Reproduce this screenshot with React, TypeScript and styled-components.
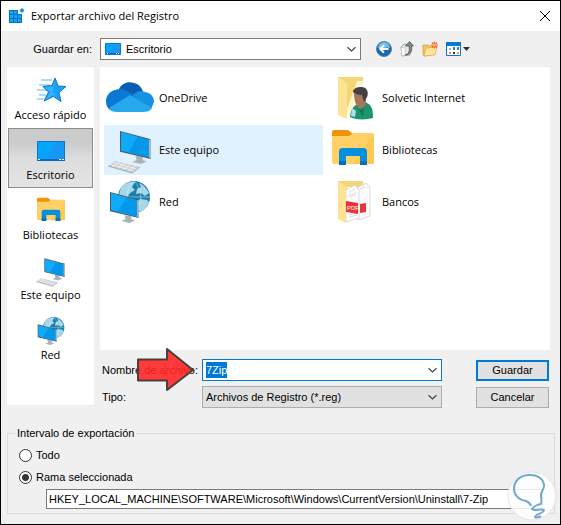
import React, { useEffect, useRef, useState } from "react";
import styled, { createGlobalStyle, css } from "styled-components";

const GlobalStyle = createGlobalStyle`
  *, *::before, *::after { box-sizing: border-box; }
  body { margin: 0; background: #f0f0f0; }
  button, input, select { font: inherit; color: inherit; margin: 0; border-radius: 0; outline: none; }
`;

const shellFont = css`
  font-family: "Open Sans", "Noto Sans", sans-serif;
`;

const Dialog = styled.div`
  display: flex;
  flex-direction: column;
  min-height: 100vh;
  border: 1px solid #000;
  background: #f0f0f0;
  color: #000;
  font: 11px/16px "Liberation Sans", Arial, sans-serif;
`;

const TitleBar = styled.header`
  ${shellFont}
  display: flex;
  align-items: center;
  gap: 6px;
  height: 30px;
  padding: 0 9px 0 8px;
  background: #fff;
`;

const Title = styled.h1`
  flex: 1;
  margin: 0;
  font-size: 11px;
  font-weight: 400;
`;

const IconButton = styled.button`
  display: flex;
  align-items: center;
  padding: 0;
  border: 0;
  background: transparent;

  svg { display: block; }
`;

const Toolbar = styled.div`
  display: grid;
  grid-template-columns: 87px minmax(0, 261px) auto;
  align-items: center;
  padding: 7px 10px 7px 6px;
  column-gap: 6px;
`;

const ToolbarLabel = styled.label`
  padding-right: 2px;
  text-align: right;
`;

const ToolbarActions = styled.div`
  display: flex;
  align-items: center;
  gap: 7px;
  padding-left: 9px;
`;

const Combo = styled.div<{ $tone?: "plain" | "focus" | "grey" }>`
  display: flex;
  align-items: center;
  gap: 4px;
  height: 22px;
  padding: 0 3px;
  border: 1px solid ${(p) => (p.$tone === "focus" ? "#0078d7" : p.$tone === "grey" ? "#adadad" : "#7a7a7a")};
  background: ${(p) => (p.$tone === "grey" ? "#e1e1e1" : "#fff")};

  > svg { flex: none; }
`;

const ComboSelect = styled.select`
  flex: 1;
  min-width: 0;
  height: 18px;
  padding: 0;
  border: 0;
  background: transparent;
  appearance: none;
`;

const ComboInput = styled.input`
  flex: 1;
  min-width: 0;
  height: 16px;
  padding: 0;
  border: 0;
  background: transparent;

  &::selection { background: #0078d7; color: #fff; }
`;

const Browser = styled.div`
  display: grid;
  grid-template-columns: 87px minmax(0, 1fr);
  column-gap: 6px;
  padding: 0 10px 0 6px;
`;

const Places = styled.nav`
  ${shellFont}
  display: flex;
  flex-direction: column;
  align-self: start;
  min-height: 338px;
  padding: 1px;
  background: #fff;
`;

const Place = styled.button<{ $active: boolean }>`
  display: flex;
  flex-direction: column;
  align-items: center;
  justify-content: space-between;
  height: 60px;
  padding: 6px 0 4px;
  border: 1px solid ${(p) => (p.$active ? "#8c8c8c" : "transparent")};
  background: ${(p) => (p.$active ? "linear-gradient(#cbcbcb 0 14px, #dcdcdc 28px, #e4e4e4)" : "transparent")};
  white-space: nowrap;
`;

const Main = styled.div`
  display: flex;
  flex-direction: column;
`;

const FileList = styled.div`
  ${shellFont}
  display: grid;
  grid-template-columns: repeat(2, minmax(0, 219px));
  align-content: start;
  gap: 2px 4px;
  min-height: 283px;
  padding: 6px 4px;
  background: #fff;
`;

const FileItem = styled.button<{ $active: boolean }>`
  display: flex;
  align-items: center;
  gap: 5px;
  height: 50px;
  padding: 0 2px;
  border: 0;
  background: ${(p) => (p.$active ? "#e0f1ff" : "transparent")};
  text-align: left;
`;

const SaveForm = styled.form`
  display: grid;
  grid-template-columns: 100px minmax(0, 240px) minmax(73px, 1fr);
  align-items: center;
  row-gap: 5px;
  padding: 9px 1px 0 2px;
  white-space: nowrap;
`;

const NameLabel = styled.label`
  position: relative;
`;

const Pointer = styled.svg`
  position: absolute;
  left: 34px;
  top: -15px;
  z-index: 1;
  pointer-events: none;
`;

const DialogButton = styled.button<{ $primary?: boolean }>`
  justify-self: end;
  width: 73px;
  height: 21px;
  padding: 0;
  border: ${(p) => (p.$primary ? "2px solid #0078d7" : "1px solid #adadad")};
  background: #e1e1e1;
`;

const Range = styled.fieldset`
  position: relative;
  min-width: 0;
  margin: 17px 5px 9px 6px;
  padding: 3px 11px 4px;
  border: 1px solid #dcdcdc;
`;

const RangeTitle = styled.legend`
  margin-left: -4px;
  padding: 0 2px;
`;

const Choice = styled.label`
  display: flex;
  align-items: center;
  gap: 4px;
  height: 22px;
`;

const Radio = styled.input`
  flex: none;
  width: 13px;
  height: 13px;
  border: 1px solid #333;
  border-radius: 50%;
  background: #fff;
  appearance: none;

  &:checked { background: radial-gradient(circle, #333 0 3px, #fff 4px); }
`;

const BranchPath = styled.input`
  display: block;
  width: calc(100% - 27px);
  height: 20px;
  margin: 1px 0 0 27px;
  padding: 0 2px;
  border: 1px solid #7a7a7a;
  background: #fff;
`;

const Watermark = styled.svg`
  position: absolute;
  right: -3px;
  bottom: -8px;
  pointer-events: none;
`;

type IconProps = { size: number };

const Chevron = () => (
  <svg width="11" height="7" viewBox="0 0 11 7" fill="none" stroke="#444" strokeWidth="1.2">
    <path d="M1.5 1.2 5.5 5 9.5 1.2" />
  </svg>
);

const RegistryIcon = () => (
  <svg width="16" height="16" viewBox="0 0 16 16">
    <path d="M0 2h9v4h4v9H0z" fill="#14a5f5" />
    <path d="M.5 2.5h8v4h4v8H.5zM.5 6.5h12M.5 10.5h12M4.5 2.5v12M8.5 6.5v8" fill="none" stroke="#0873b8" />
    <path d="m13 0 2.6 2.5L13 5l-2.6-2.5z" fill="#1b91dc" />
  </svg>
);

const DesktopIcon = ({ size }: IconProps) => (
  <svg width={size} height={size} viewBox="0 0 32 32">
    <path d="M2 6h28v20H2z" fill="#05a5fb" />
    <path d="M20 6h10v18H11z" fill="#1697f2" />
    <path d="M2.5 6.5h27v19h-27z" fill="none" stroke="#0878cc" />
    <path d="M2 24h28v2H2z" fill="#086bbd" />
    <path d="M3 24.500h2m19 0h2m1 0h2" stroke="#fff" />
  </svg>
);

const SmallDesktopIcon = () => (
  <svg width="18" height="14" viewBox="0 0 18 14">
    <path d="M1.500 1.500h15v11h-15z" fill="#05a5fb" stroke="#0878cc" />
    <path d="M11 2h5v9H6z" fill="#1c98f0" />
    <path d="M2 11.500h14" stroke="#086bbd" />
    <path d="M3 11.500h1m8 0h1m1 0h1" stroke="#fff" />
  </svg>
);

const StarIcon = () => (
  <svg width="32" height="32" viewBox="0 0 32 32">
    <path d="M6 5h11M4 10h11M2 15h10M4 20h7M2 24h6" stroke="#55b7ef" />
    <path d="m20 3 3 8 8 .5-7 6 2 9-7.500-5L9 26l4.500-9L8 11.500l9-1z" fill="#18a2f5" stroke="#0876c8" strokeLinejoin="round" />
    <path d="m20 5-2.500 12 5.500 6-4.500-3L11 25l4-8-5-5 8-1z" fill="#45bcff" opacity=".6" />
  </svg>
);

const CloudIcon = () => (
  <svg width="48" height="48" viewBox="0 0 48 48">
    <path d="M13 15C16 9 22 7 28 9c5 1 8 5 9 9l-12 9-13-10z" fill="#0a5cb5" />
    <path d="M9 16c5-2 10-1 14 2l9 6-21 13C4 38 0 34 0 27c0-5 4-10 9-11z" fill="#0b78d4" />
    <path d="M27 21c4-4 8-5 12-3 6 1 9 5 9 10l-3 7-18-9z" fill="#1492df" />
    <path d="m3 34 21-13 22 13c-2 3-5 4-9 4H11c-4 0-6-1-8-4z" fill="#25a9ec" />
  </svg>
);

const Screen = ({ x, y, w }: { x: number; y: number; w: number }) => (
  <g transform={`translate(${x} ${y}) scale(${w / 30})`}>
    <path d="m15 24 7 1v3l4 1.500-6 2.500-8-2 4-2z" fill="#aab3ba" />
    <path d="m0 0 30 8v19L0 20z" fill="#4c5963" />
    <path d="m1 1 27 7.500v17L1 19z" fill="#0fabf9" />
    <path d="m17 5.500 11 3v17L8 21z" fill="#0698e8" />
    <path d="M28 8.500 30 8v19l-2-1.500z" fill="#a8b5be" />
  </g>
);

const ComputerIcon = ({ size }: IconProps) => (
  <svg width={size} height={size} viewBox="0 0 48 48">
    <Screen x={14} y={5} w={31} />
    <path d="m9 35 25 6-8 6-24-7z" fill="#c9cdd0" />
    <path d="m7 36.500 24 6.500M5 38.500l24 6.500M14 36l-8 5M19 37l-8 6M24 39l-8 5M29 40l-8 6" fill="none" stroke="#f5f6f7" strokeWidth=".8" />
    <path d="m2 40 24 7 8-6" fill="none" stroke="#8c9399" strokeWidth=".7" />
  </svg>
);

const NetworkIcon = ({ size }: IconProps) => (
  <svg width={size} height={size} viewBox="0 0 48 48">
    <circle cx="28" cy="19" r="16" fill="#1c7fab" />
    <path d="M15 9c4-4 9-6 14-5l-3 5 3 3-5 3-3 5-8-3zM33 5c5 2 8 6 10 10l-4 3-4-3-5 1 1-5 4-2zM34 21l7 1 2 2c-2 5-5 8-9 10l-3-6z" fill="#a8d7e9" />
    <path d="M12 19h32M28 3c-9 9-9 23 0 32M28 3c9 9 9 23 0 32" fill="none" stroke="#d6f1fa" opacity=".5" />
    <Screen x={4} y={14} w={29} />
  </svg>
);

const LibraryIcon = ({ size }: IconProps) => (
  <svg width={size} height={size} viewBox="0 0 48 48">
    <path d="M3 6c0-1 1-2 2-2h14l5 4-5 4H3z" fill="#ee9407" />
    <path d="M3 10h17l4-3h19c2 0 2 1 2 2v27c0 1-1 2-2 2H5c-1 0-2-1-2-2z" fill="#ffd066" />
    <path d="M45 9v27c0 1-1 2-2 2H24z" fill="#ffc94f" />
    <path d="M10 39V26c0-3 1-4 4-4h20c3 0 4 1 4 4v13h-7v-9H17v9z" fill="#058fdc" />
    <path d="M10 35h7v4h-7zM31 35h7v4h-7z" fill="#076fc2" />
  </svg>
);

const FolderShell = () => (
  <>
    <path d="M9 3h25v38H9z" fill="#f4d676" />
    <path d="M28 7h6v34H16z" fill="#fff3d0" />
    <path d="m9 3 9 6v36L9 41z" fill="#ffe394" />
  </>
);

const UserFolderIcon = () => (
  <svg width="48" height="48" viewBox="0 0 48 48">
    <FolderShell />
    <path d="M21 43c1-7 3-12 9-13l5-3 6 4c3 4 3 8 3 13-7 2-18 2-23-1z" fill="#1d9370" />
    <path d="M25 18h12v12c-2 5-6 6-9 2-2-3-3-8-3-14z" fill="#a4765b" />
    <path d="M24 18c0-4 5-5 8-5 6 0 8 5 6 10l-3 5-2-7c-4 0-7-1-9-3z" fill="#414044" />
    <path d="m27 32 4 4 4-3-1 9z" fill="#127658" />
    <path d="m23 34 4 3-1 6-4-1z" fill="#a9dfef" />
  </svg>
);

const PdfFolderIcon = () => (
  <svg width="48" height="48" viewBox="0 0 48 48">
    <path d="M9 3h25v6H18v34l-9-2z" fill="#f4d676" />
    <path d="m29 9 8-4 4 4v29l-12 4z" fill="#fafafa" stroke="#d0d0d0" strokeWidth=".7" />
    <path d="m17 12 9-5 4 5v28l-13 4z" fill="#fff" stroke="#ccc" strokeWidth=".7" />
    <path d="m20 14 6-3m-6 6 7-2m-7 4 7-2m-7 20 8-2m-8 4 8-2m3-29 5-2m-5 5 5-2m-5 20 6-2m-6 4 6-2" stroke="#ddd" />
    <path d="m17 23 12 2v11l-12-2zM31 26l6-1v9l-6 1z" fill="#ee3338" />
    <text x="18" y="32" fill="#fff" fontFamily="Liberation Sans, sans-serif" fontSize="6">PDF</text>
    <path d="m9 3 8 6v36L9 41z" fill="#ffe394" />
  </svg>
);

const BackIcon = () => (
  <svg width="16" height="16" viewBox="0 0 16 16">
    <circle cx="8" cy="8" r="7.500" fill="#1669aa" stroke="#57859f" />
    <path d="M2 7a6 6 0 0 1 12 0c-4-2-8 2-12 0z" fill="#76bde7" />
    <path d="M12.500 8H4.500M8 4.300 4.300 8 8 11.700" fill="none" stroke="#fff" strokeWidth="2" />
  </svg>
);

const UpIcon = () => (
  <svg width="16" height="16" viewBox="0 0 16 16">
    <path d="M2 6 5 3l6 1v10l-8 1z" fill="#e6e8e9" stroke="#a3a7a9" />
    <path d="M6 14c4-1 5-4 4-9H6.500L10.500.5 14.500 5h-2c1 5-1 9-6.500 9z" fill="#7d898f" stroke="#424c51" strokeWidth=".7" />
    <path d="m2 7 4-1v8l-3 1z" fill="#fff" stroke="#bbb" strokeWidth=".6" />
  </svg>
);

const NewFolderIcon = () => (
  <svg width="17" height="16" viewBox="0 0 17 16">
    <path d="M1 4h5l1 1h6v8L2 15 1 13z" fill="#f5c35b" stroke="#d99a31" strokeWidth=".7" />
    <path d="m4 7 11-1-2 8-11 1z" fill="#ffe49a" stroke="#e0a646" strokeWidth=".7" />
    <path d="M12.500.500v7M9 4h7M10 1.500l5 5M15 1.500l-5 5" stroke="#ef6039" strokeWidth="1.100" />
    <circle cx="12.500" cy="4" r="1.500" fill="#ffc34b" />
  </svg>
);

const ViewIcon = () => (
  <svg width="24" height="16" viewBox="0 0 24 16">
    <path d="M.5 1.500h14v13H.5z" fill="#fff" stroke="#0878cf" />
    <path d="M0 1h15v4H0z" fill="#0878cf" />
    <path d="M3 7h2v2H3z" fill="#9db3bd" />
    <path d="M7 6h2v3H7zM11 6h2v3h-2z" fill="#3082ba" />
    <path d="M3 11h2v2H3z" fill="#ee8175" />
    <path d="M7 11h2v2H7z" fill="#292779" />
    <path d="M11 11h2v2h-2z" fill="#e3a331" />
    <path d="M17 6h7l-3.500 4z" fill="#333" />
  </svg>
);

const places = [
  { name: "Acceso rápido", icon: <StarIcon /> },
  { name: "Escritorio", icon: <DesktopIcon size={32} /> },
  { name: "Bibliotecas", icon: <LibraryIcon size={32} /> },
  { name: "Este equipo", icon: <ComputerIcon size={32} /> },
  { name: "Red", icon: <NetworkIcon size={32} /> },
];

const files = [
  { name: "OneDrive", icon: <CloudIcon /> },
  { name: "Solvetic Internet", icon: <UserFolderIcon /> },
  { name: "Este equipo", icon: <ComputerIcon size={48} /> },
  { name: "Bibliotecas", icon: <LibraryIcon size={48} /> },
  { name: "Red", icon: <NetworkIcon size={48} /> },
  { name: "Bancos", icon: <PdfFolderIcon /> },
];

export default function App() {
  const [place, setPlace] = useState("Escritorio");
  const [file, setFile] = useState("Este equipo");
  const nameRef = useRef<HTMLInputElement>(null);

  useEffect(() => {
    nameRef.current?.focus();
    nameRef.current?.select();
  }, []);

  return (
    <>
      <GlobalStyle />
      <Dialog role="dialog" aria-labelledby="dialog-title">
        <TitleBar>
          <RegistryIcon />
          <Title id="dialog-title">Exportar archivo del Registro</Title>
          <IconButton type="button" aria-label="Cerrar">
            <svg width="12" height="12" viewBox="0 0 12 12" stroke="#000">
              <path d="m1 1 10 10M11 1 1 11" />
            </svg>
          </IconButton>
        </TitleBar>

        <Toolbar>
          <ToolbarLabel htmlFor="folder">Guardar en:</ToolbarLabel>
          <Combo>
            <SmallDesktopIcon />
            <ComboSelect id="folder">
              <option>Escritorio</option>
            </ComboSelect>
            <Chevron />
          </Combo>
          <ToolbarActions>
            <IconButton type="button" aria-label="Atrás"><BackIcon /></IconButton>
            <IconButton type="button" aria-label="Subir un nivel"><UpIcon /></IconButton>
            <IconButton type="button" aria-label="Nueva carpeta"><NewFolderIcon /></IconButton>
            <IconButton type="button" aria-label="Vista"><ViewIcon /></IconButton>
          </ToolbarActions>
        </Toolbar>

        <Browser>
          <Places aria-label="Ubicaciones">
            {places.map((p) => (
              <Place key={p.name} type="button" $active={p.name === place} onClick={() => setPlace(p.name)}>
                {p.icon}
                {p.name}
              </Place>
            ))}
          </Places>
          <Main>
            <FileList>
              {files.map((f) => (
                <FileItem key={f.name} type="button" $active={f.name === file} onClick={() => setFile(f.name)}>
                  {f.icon}
                  {f.name}
                </FileItem>
              ))}
            </FileList>
            <SaveForm onSubmit={(e) => e.preventDefault()}>
              <NameLabel htmlFor="file-name">
                Nombre de archivo:
                <Pointer width="60" height="46" viewBox="0 0 60 46">
                  <path
                    d="M2 12.500h29V2l26 21-26 20V33.500H2z"
                    fill="#ff2626"
                    fillOpacity=".9"
                    stroke="#493f3b"
                    strokeWidth="2"
                    strokeLinejoin="round"
                  />
                </Pointer>
              </NameLabel>
              <Combo $tone="focus">
                <ComboInput id="file-name" ref={nameRef} defaultValue="7Zip" />
                <Chevron />
              </Combo>
              <DialogButton type="submit" $primary>Guardar</DialogButton>
              <label htmlFor="file-type">Tipo:</label>
              <Combo $tone="grey">
                <ComboSelect id="file-type">
                  <option>Archivos de Registro (*.reg)</option>
                </ComboSelect>
                <Chevron />
              </Combo>
              <DialogButton type="button">Cancelar</DialogButton>
            </SaveForm>
          </Main>
        </Browser>

        <Range>
          <RangeTitle>Intervalo de exportación</RangeTitle>
          <Choice>
            <Radio type="radio" name="range" />
            Todo
          </Choice>
          <Choice>
            <Radio type="radio" name="range" defaultChecked />
            Rama seleccionada
          </Choice>
          <BranchPath
            aria-label="Rama seleccionada"
            defaultValue={"HKEY_LOCAL_MACHINE\\SOFTWARE\\Microsoft\\Windows\\CurrentVersion\\Uninstall\\7-Zip"}
          />
          <Watermark width="50" height="50" viewBox="0 0 50 50" aria-hidden="true">
            <circle cx="25" cy="25" r="24" fill="#fff" fillOpacity=".85" stroke="#e4e4e4" />
            <path
              d="M24 35c-1-3-2-4-5-5-7-1-12-6-12-12C7 9 14 4 23 4s14 5 14 11c0 4-3 5-3 9 0 3 1 6 0 9-3 0-8 3-9 5 3 3 9-1 12 1 0 3-8 4-9 7 2 1 5 0 6-1"
              fill="none"
              stroke="#70a9cb"
              strokeWidth="2"
            />
          </Watermark>
        </Range>
      </Dialog>
    </>
  );
}
